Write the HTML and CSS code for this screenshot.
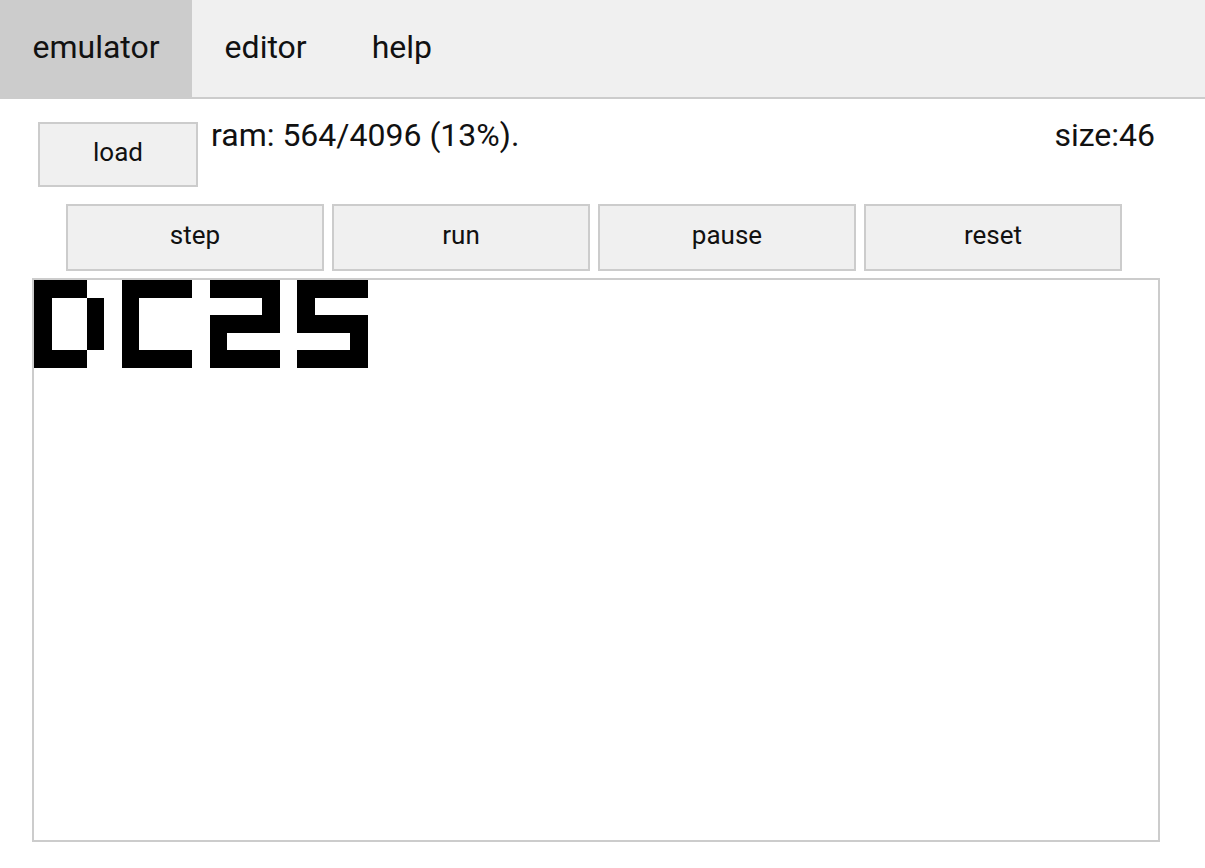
FILE: index.html
```html
<!DOCTYPE html>
<html lang="en">
<head>
<meta charset="utf-8">
<title>emulator</title>
<link rel="stylesheet" href="styles.css">
</head>
<body>
<nav class="tabs">
  <div class="tab active">emulator</div>
  <div class="tab">editor</div>
  <div class="tab">help</div>
</nav>
<main class="main">
  <div class="top-row">
    <button class="btn load">load</button>
    <span class="ram">ram: 564/4096 (13%).</span>
    <span class="size">size:46</span>
  </div>
  <div class="controls">
    <button class="btn ctrl">step</button>
    <button class="btn ctrl">run</button>
    <button class="btn ctrl">pause</button>
    <button class="btn ctrl">reset</button>
  </div>
  <div class="screen">
    <svg class="display" viewBox="0 0 64 32" preserveAspectRatio="none" shape-rendering="crispEdges">
      <g fill="#000">
        <rect x="0" y="0" width="3" height="1"/>
        <rect x="0" y="1" width="1" height="3"/>
        <rect x="3" y="1" width="1" height="3"/>
        <rect x="0" y="4" width="3" height="1"/>

        <rect x="5" y="0" width="4" height="1"/>
        <rect x="5" y="1" width="1" height="3"/>
        <rect x="5" y="4" width="4" height="1"/>

        <rect x="10" y="0" width="4" height="1"/>
        <rect x="13" y="1" width="1" height="1"/>
        <rect x="10" y="2" width="4" height="1"/>
        <rect x="10" y="3" width="1" height="1"/>
        <rect x="10" y="4" width="4" height="1"/>

        <rect x="15" y="0" width="4" height="1"/>
        <rect x="15" y="1" width="1" height="1"/>
        <rect x="15" y="2" width="4" height="1"/>
        <rect x="18" y="3" width="1" height="1"/>
        <rect x="15" y="4" width="4" height="1"/>
      </g>
    </svg>
  </div>
</main>
</body>
</html>
```
FILE: styles.css
```css
html, body {
  margin: 0;
  padding: 0;
  background: #fff;
}

body {
  font-family: Roboto, "Liberation Sans", sans-serif;
  color: #000;
}

.tabs {
  display: flex;
  height: 97px;
  background: #f0f0f0;
  border-bottom: 2px solid #ccc;
}

.tab {
  padding: 0 32.5px;
  font-size: 32px;
  line-height: 95px;
  color: #111;
}

.tab.active {
  background: #ccc;
}

.main {
  padding: 0 45px 0 32px;
}

.top-row {
  display: flex;
  align-items: flex-start;
  padding-top: 23px;
}

.btn {
  font-family: Roboto, "Liberation Sans", sans-serif;
  background: #f0f0f0;
  border: 2px solid #ccc;
  color: #111;
  padding: 0 0 6px 0;
  margin: 0;
  box-sizing: border-box;
}

.load {
  width: 160px;
  height: 65px;
  margin-left: 6px;
  font-size: 26px;
}

.ram {
  margin-left: 13px;
  margin-top: -5px;
  font-size: 32px;
  line-height: 37px;
  color: #111;
}

.size {
  margin-left: auto;
  margin-right: 5px;
  margin-top: -5px;
  font-size: 32px;
  line-height: 37px;
  color: #111;
}

.controls {
  display: flex;
  gap: 8px;
  margin: 17px 0 0 34px;
}

.ctrl {
  width: 258px;
  height: 67px;
  font-size: 26px;
}

.screen {
  margin-top: 7px;
  width: 1124px;
  height: 560px;
  border: 2px solid #ccc;
}

.display {
  display: block;
  width: 1124px;
  height: 560px;
}
```
